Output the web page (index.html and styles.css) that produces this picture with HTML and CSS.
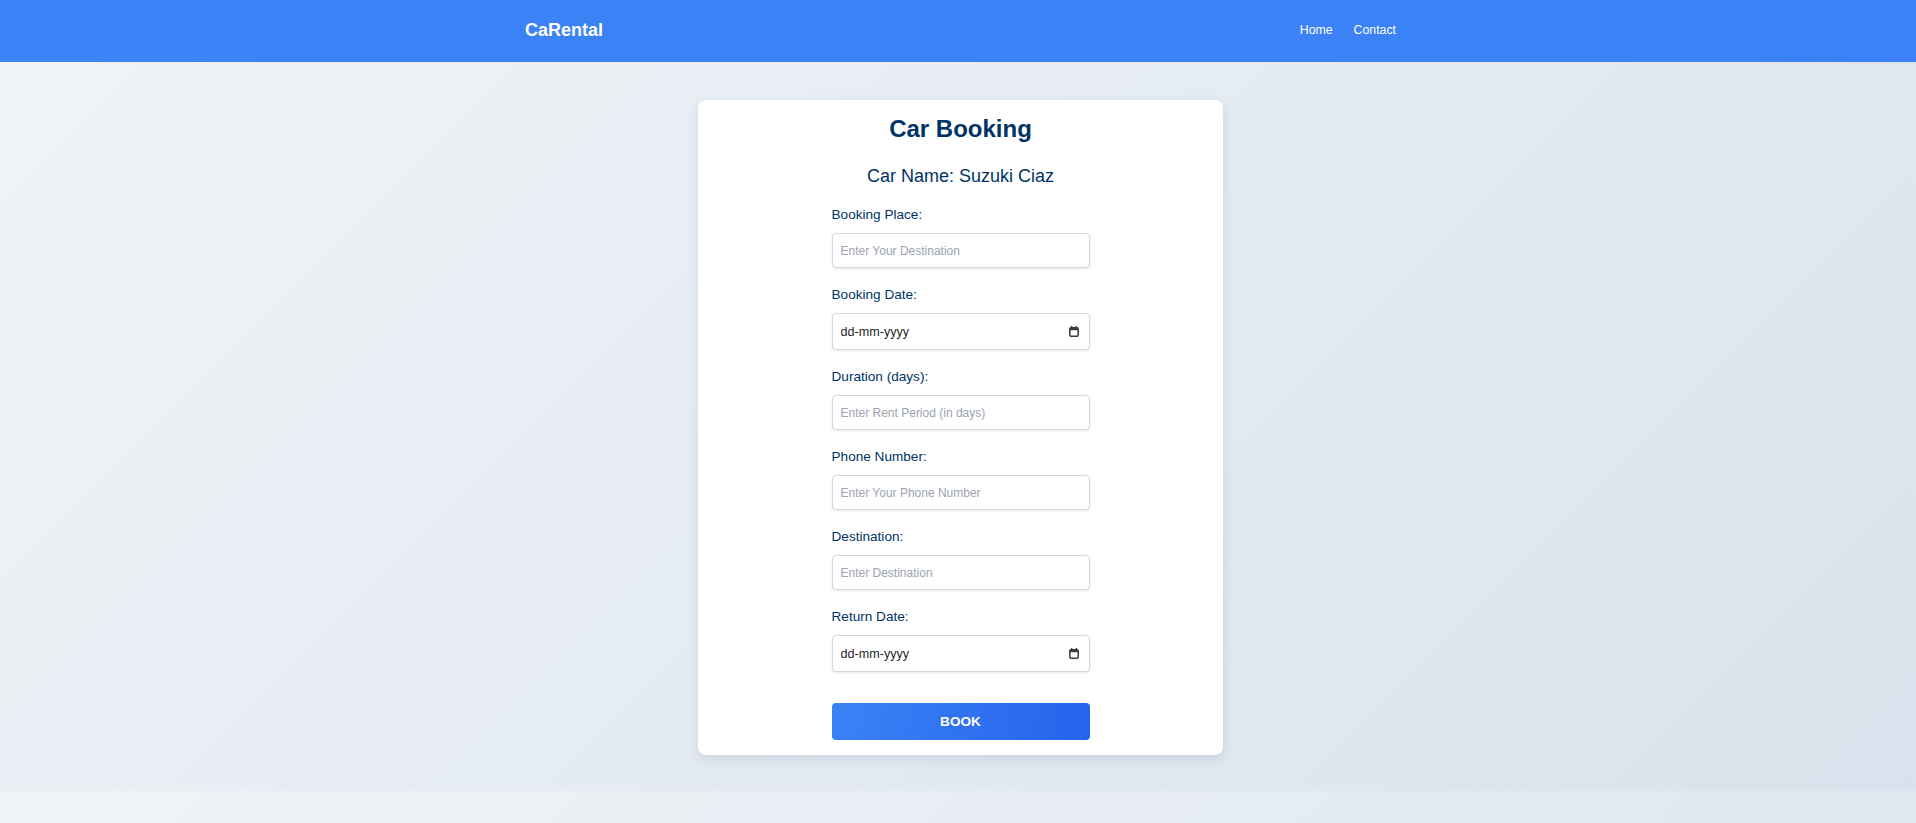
FILE: index.html
```html
<!DOCTYPE html>
<html lang="en">
<head>
<meta charset="utf-8">
<title>CaRental - Car Booking</title>
<link rel="stylesheet" href="styles.css">
</head>
<body>
<header class="topbar">
  <div class="topbar-inner">
    <a class="brand" href="#">CaRental</a>
    <nav class="nav">
      <a href="#">Home</a>
      <a href="#">Contact</a>
    </nav>
  </div>
</header>
<main class="main">
  <section class="card">
    <h1 class="title">Car Booking</h1>
    <h2 class="car-name">Car Name: Suzuki Ciaz</h2>
    <form class="booking">
      <div class="field">
        <label for="place">Booking Place:</label>
        <input class="input" id="place" type="text" placeholder="Enter Your Destination">
      </div>
      <div class="field">
        <label for="bdate">Booking Date:</label>
        <div class="date-field">
          <input class="date-text" id="bdate" type="text" placeholder="dd-mm-yyyy">
          <svg class="cal" width="10" height="11" viewBox="0 0 10 11" aria-hidden="true"><rect x="2" y="0" width="1.3" height="2.2" fill="#3a3a3a"/><rect x="6.7" y="0" width="1.3" height="2.2" fill="#3a3a3a"/><rect x="0.8" y="1.8" width="8.4" height="8.4" rx="1.2" fill="none" stroke="#3a3a3a" stroke-width="1.5"/><rect x="1" y="2" width="8" height="2.2" fill="#3a3a3a"/></svg>
        </div>
      </div>
      <div class="field">
        <label for="dur">Duration (days):</label>
        <input class="input" id="dur" type="text" placeholder="Enter Rent Period (in days)">
      </div>
      <div class="field">
        <label for="phone">Phone Number:</label>
        <input class="input" id="phone" type="text" placeholder="Enter Your Phone Number">
      </div>
      <div class="field">
        <label for="dest">Destination:</label>
        <input class="input" id="dest" type="text" placeholder="Enter Destination">
      </div>
      <div class="field">
        <label for="rdate">Return Date:</label>
        <div class="date-field">
          <input class="date-text" id="rdate" type="text" placeholder="dd-mm-yyyy">
          <svg class="cal" width="10" height="11" viewBox="0 0 10 11" aria-hidden="true"><rect x="2" y="0" width="1.3" height="2.2" fill="#3a3a3a"/><rect x="6.7" y="0" width="1.3" height="2.2" fill="#3a3a3a"/><rect x="0.8" y="1.8" width="8.4" height="8.4" rx="1.2" fill="none" stroke="#3a3a3a" stroke-width="1.5"/><rect x="1" y="2" width="8" height="2.2" fill="#3a3a3a"/></svg>
        </div>
      </div>
      <button class="book-btn" type="button">BOOK</button>
    </form>
  </section>
</main>
</body>
</html>
```

FILE: styles.css
```css
* {
  box-sizing: border-box;
}

body {
  margin: 0;
  font-family: "Liberation Sans", Arial, sans-serif;
  background: linear-gradient(135deg, #f0f4f8, #d9e2ec);
}

.topbar {
  height: 62px;
  background: #3b82f6;
  padding: 0 0 2px 5px;
  display: flex;
  align-items: center;
}

.topbar-inner {
  width: 871px;
  margin: 0 auto;
  display: flex;
  justify-content: space-between;
  align-items: center;
}

.brand {
  color: #ffffff;
  font-size: 18px;
  line-height: 21px;
  font-weight: bold;
  text-decoration: none;
}

.nav {
  display: flex;
  gap: 21px;
}

.nav a {
  color: #ffffff;
  font-size: 12.3px;
  line-height: 14px;
  text-decoration: none;
}

.main {
  padding: 38px 0 36px 5px;
  display: flex;
  justify-content: center;
}

.card {
  width: 525px;
  background: #ffffff;
  border-radius: 8px;
  padding: 15px 0 15px;
  box-shadow: 0 4px 12px rgba(30, 50, 90, 0.12);
}

.title {
  margin: 0;
  text-align: center;
  font-size: 24px;
  line-height: 28px;
  font-weight: bold;
  color: #003366;
}

.car-name {
  margin: 23px 0 0;
  text-align: center;
  font-size: 18px;
  line-height: 21px;
  font-weight: normal;
  color: #003366;
}

.booking {
  width: 258px;
  margin: 20px auto 0;
  display: flex;
  flex-direction: column;
  gap: 19px;
}

.field {
  display: flex;
  flex-direction: column;
}

.field label {
  font-size: 13.6px;
  line-height: 15px;
  color: #003366;
  margin-bottom: 11px;
}

.input {
  height: 35px;
  width: 100%;
  margin: 0;
  padding: 0 8px;
  border: 1px solid #d3d7df;
  border-radius: 4px;
  box-shadow: 0 1px 3px rgba(0, 0, 0, 0.1);
  font-family: "Liberation Sans", Arial, sans-serif;
  font-size: 12px;
  color: #1f2937;
  background: #ffffff;
  outline: none;
}

.input::placeholder {
  color: #9ca3af;
}

.date-field {
  height: 37px;
  display: flex;
  align-items: center;
  border: 1px solid #d3d7df;
  border-radius: 4px;
  box-shadow: 0 1px 3px rgba(0, 0, 0, 0.1);
  background: #ffffff;
}

.date-text {
  flex: 1;
  min-width: 0;
  height: 100%;
  margin: 0;
  padding: 0 8px;
  border: none;
  background: transparent;
  font-family: "Liberation Sans", Arial, sans-serif;
  font-size: 12.6px;
  color: #1f1f1f;
  outline: none;
}

.date-text::placeholder {
  color: #1f1f1f;
}

.cal {
  flex: none;
  margin-right: 10px;
}

.book-btn {
  margin-top: 12px;
  height: 37px;
  width: 100%;
  border: none;
  border-radius: 4px;
  background: linear-gradient(100deg, #3b82f6, #2563eb);
  color: #ffffff;
  font-family: "Liberation Sans", Arial, sans-serif;
  font-size: 13.6px;
  font-weight: bold;
  cursor: pointer;
}
```
